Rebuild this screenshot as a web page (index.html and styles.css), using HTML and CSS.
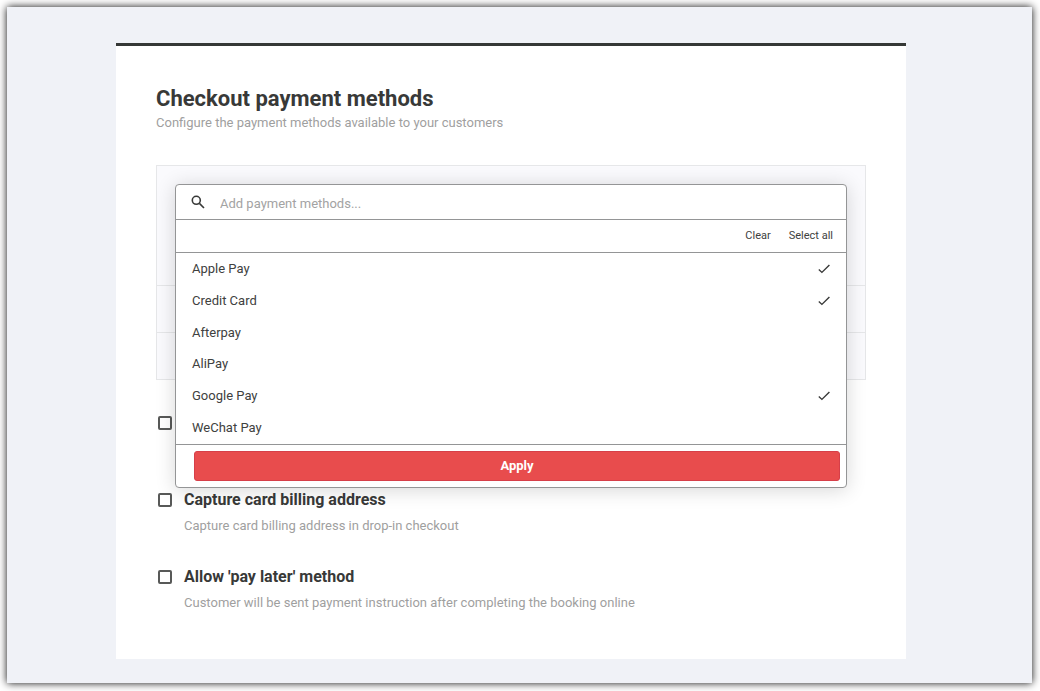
FILE: index.html
```html
<!DOCTYPE html>
<html lang="en">
<head>
    <meta charset="UTF-8">
    <meta name="viewport" content="width=device-width, initial-scale=1.0">
    <title>Checkout payment methods</title>
    <link rel="stylesheet" href="styles.css">
</head>
<body>
    <div class="frame">
        <main class="card">
            <h1>Checkout payment methods</h1>
            <p class="hint">Configure the payment methods available to your customers</p>

            <div class="methods">
                <div class="methods-row methods-row-tall"></div>
                <div class="methods-row"></div>
                <div class="methods-row"></div>

                <!-- Payment method picker -->
                <form class="dropdown" onsubmit="return false">
                    <div class="search">
                        <svg class="search-icon" viewBox="0 0 14 14" aria-hidden="true">
                            <circle cx="5.3" cy="5.3" r="4" />
                            <path d="M8.4 8.4L13 13" />
                        </svg>
                        <input type="text" placeholder="Add payment methods..." aria-label="Add payment methods">
                    </div>
                    <div class="actions">
                        <button type="button" onclick="setAll(false)">Clear</button>
                        <button type="button" onclick="setAll(true)">Select all</button>
                    </div>
                    <div class="options">
                        <label class="option">Apple Pay
                            <input type="checkbox" checked>
                            <svg viewBox="0 0 12 10" aria-hidden="true"><path d="M0.8 5.6L3.9 8.4L11.4 0.9" /></svg>
                        </label>
                        <label class="option">Credit Card
                            <input type="checkbox" checked>
                            <svg viewBox="0 0 12 10" aria-hidden="true"><path d="M0.8 5.6L3.9 8.4L11.4 0.9" /></svg>
                        </label>
                        <label class="option">Afterpay
                            <input type="checkbox">
                            <svg viewBox="0 0 12 10" aria-hidden="true"><path d="M0.8 5.6L3.9 8.4L11.4 0.9" /></svg>
                        </label>
                        <label class="option">AliPay
                            <input type="checkbox">
                            <svg viewBox="0 0 12 10" aria-hidden="true"><path d="M0.8 5.6L3.9 8.4L11.4 0.9" /></svg>
                        </label>
                        <label class="option">Google Pay
                            <input type="checkbox" checked>
                            <svg viewBox="0 0 12 10" aria-hidden="true"><path d="M0.8 5.6L3.9 8.4L11.4 0.9" /></svg>
                        </label>
                        <label class="option">WeChat Pay
                            <input type="checkbox">
                            <svg viewBox="0 0 12 10" aria-hidden="true"><path d="M0.8 5.6L3.9 8.4L11.4 0.9" /></svg>
                        </label>
                    </div>
                    <div class="footer">
                        <button type="submit" class="apply">Apply</button>
                    </div>
                </form>
            </div>

            <div class="settings">
                <div class="setting">
                    <input type="checkbox" aria-label="Setting">
                </div>
                <div class="setting">
                    <input type="checkbox" id="billing">
                    <div>
                        <label for="billing">Capture card billing address</label>
                        <p class="hint">Capture card billing address in drop-in checkout</p>
                    </div>
                </div>
                <div class="setting">
                    <input type="checkbox" id="later">
                    <div>
                        <label for="later">Allow 'pay later' method</label>
                        <p class="hint">Customer will be sent payment instruction after completing the booking online</p>
                    </div>
                </div>
            </div>
        </main>
    </div>

    <script>
        function setAll(checked) {
            document.querySelectorAll('.option input').forEach(input => {
                input.checked = checked;
            });
        }
    </script>
</body>
</html>
```

FILE: styles.css
```css
* {
    box-sizing: border-box;
}

body {
    margin: 0;
    padding: 7px 8px 8px 7px;
    min-height: 100vh;
    display: flex;
    background: white;
    color: #404140;
    font-family: Roboto, sans-serif;
    font-size: 13px;
    line-height: 16px;
}

h1, p {
    margin: 0;
}

input, button {
    font: inherit;
    color: inherit;
}

.frame {
    flex: 1;
    padding: 36px 67px 24px 50px;
    background: #f0f2f7;
    box-shadow: 0 0 8px rgba(0, 0, 0, 0.95);
}

.card {
    max-width: 790px;
    margin: 0 auto;
    padding: 40px 40px 15px;
    border-top: 3px solid #353836;
    background: white;
}

h1 {
    color: #383938;
    font-size: 22px;
    line-height: 26px;
}

.hint {
    padding-top: 3px;
    color: #9f9f9f;
}

.methods {
    position: relative;
    margin-top: 34px;
    border: 1px solid #e6e7e9;
    background: #fafafd;
}

.methods-row {
    height: 47px;
}

.methods-row + .methods-row {
    border-top: 1px solid #e6e7e9;
}

.methods-row-tall {
    height: 119px;
}

/* Dropdown */
.dropdown {
    position: absolute;
    top: 18px;
    left: 18px;
    right: 18px;
    border: 1px solid #949596;
    border-radius: 4px;
    background: white;
    box-shadow: 0 2px 20px rgba(0, 0, 0, 0.16);
}

.search {
    display: flex;
    align-items: center;
    gap: 15px;
    height: 35px;
    padding: 0 15px;
    border-bottom: 1px solid #949596;
}

.search-icon {
    width: 14px;
    height: 14px;
    fill: none;
    stroke: #383938;
    stroke-width: 1.6;
}

.search input {
    flex: 1;
    height: 34px;
    padding: 2px 0 0;
    border: none;
    outline: none;
    background: none;
}

.search input::placeholder {
    color: #a3a3a3;
}

.actions {
    display: flex;
    justify-content: flex-end;
    align-items: center;
    gap: 18px;
    height: 33px;
    padding-right: 13px;
    border-bottom: 1px solid #949596;
}

.actions button {
    padding: 0;
    border: none;
    background: none;
    font-size: 11px;
    cursor: pointer;
}

.options {
    display: flex;
    flex-direction: column;
    height: 191px;
}

.option {
    flex: 1;
    display: flex;
    justify-content: space-between;
    align-items: center;
    padding: 0 16px;
    cursor: pointer;
}

.option input {
    appearance: none;
    margin: 0;
}

.option svg {
    display: none;
    width: 12px;
    height: 10px;
    fill: none;
    stroke: #383938;
    stroke-width: 1.4;
}

.option input:checked + svg {
    display: block;
}

.footer {
    padding: 6px 6px 6px 18px;
    border-top: 1px solid #949596;
}

.apply {
    display: block;
    width: 100%;
    height: 30px;
    padding: 0;
    border: 1px solid #d63f49;
    border-radius: 3px;
    background: #e84c4d;
    color: white;
    font-weight: bold;
    cursor: pointer;
}

/* Settings under the methods table */
.settings {
    margin-top: 33px;
}

.setting {
    display: flex;
    align-items: flex-start;
    gap: 12px;
    min-height: 77px;
    padding-left: 2px;
}

.setting input {
    appearance: none;
    width: 14px;
    height: 14px;
    margin: 3px 0 0;
    border: 2px solid #585958;
    border-radius: 2px;
    background: white;
}

.setting input:checked {
    background: #585958;
}

.setting label {
    color: #383938;
    font-size: 16px;
    line-height: 20px;
    font-weight: bold;
}

.setting .hint {
    padding-top: 8px;
}
```
